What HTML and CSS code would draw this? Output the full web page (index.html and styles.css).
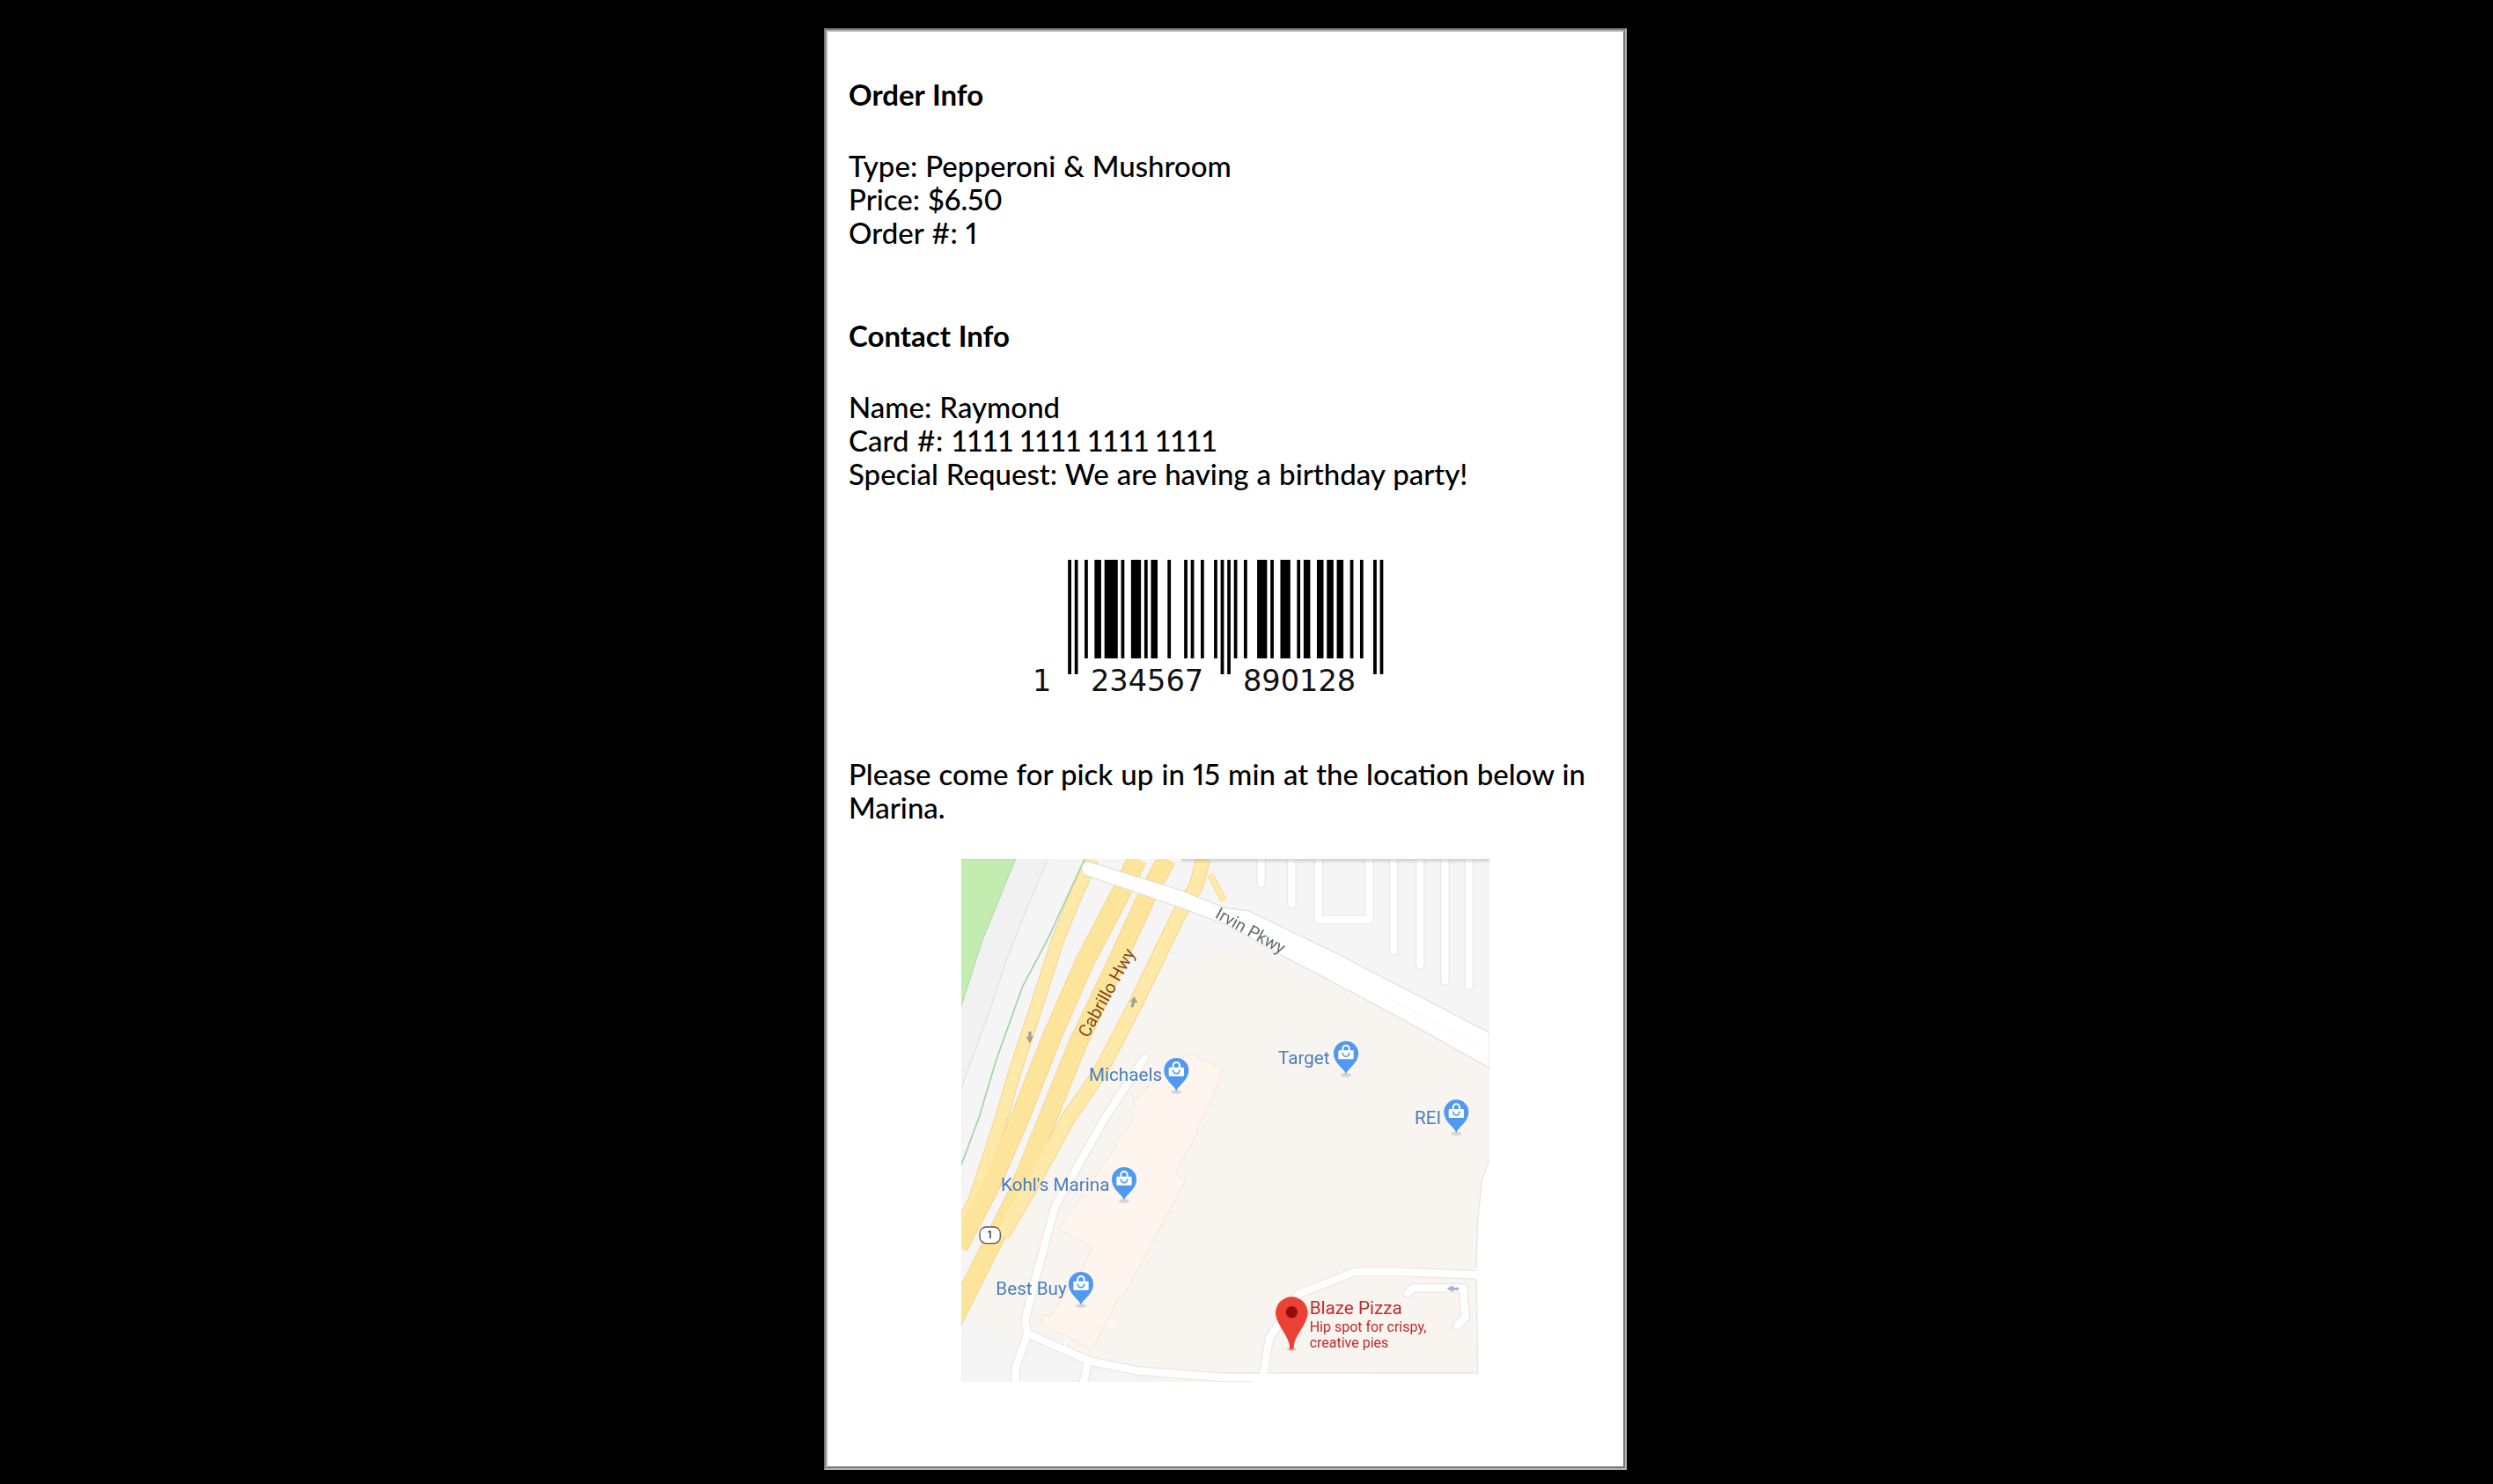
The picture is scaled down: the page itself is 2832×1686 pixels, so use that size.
FILE: index.html
```html
<!DOCTYPE html>
<html lang="en">
<head>
<meta charset="utf-8">
<title>Order Receipt</title>
<link rel="stylesheet" href="styles.css">
</head>
<body>
<main class="card">
  <div class="card-inner">
    <h2 class="heading">Order Info</h2>
    <p class="lines">Type: Pepperoni &amp; Mushroom<br>Price: $6.50<br>Order #: 1</p>
    <h2 class="heading heading-next">Contact Info</h2>
    <p class="lines">Name: Raymond<br>Card #: <span class="card-number">1111 1111 1111 1111</span><br>Special Request: We are having a birthday party!</p>

    <svg class="barcode" viewBox="0 0 440 170" width="440" height="170" role="img" aria-label="Barcode 1234567890128">
      <g transform="translate(41.2 0) scale(3.77 1)">
        <path class="bar" d="M0 6h1V136H0zM2 6h1V136H2zM46 6h1V136H46zM48 6h1V136H48zM92 6h1V136H92zM94 6h1V136H94z"/>
        <path class="bar" d="M5 6h1V118H5zM8 6h2V118H8zM11 6h4V118H11zM16 6h1V118H16zM19 6h3V118H19zM23 6h1V118H23zM25 6h2V118H25zM30 6h1V118H30zM35 6h1V118H35zM37 6h1V118H37zM40 6h1V118H40zM44 6h1V118H44zM50 6h1V118H50zM53 6h1V118H53zM57 6h3V118H57zM61 6h1V118H61zM64 6h3V118H64zM69 6h1V118H69zM71 6h2V118H71zM75 6h2V118H75zM78 6h2V118H78zM81 6h2V118H81zM85 6h1V118H85zM88 6h1V118H88z"/>
      </g>
      <text class="digits" x="1" y="155">1</text>
      <text class="digits" x="67" y="155">234567</text>
      <text class="digits" x="240" y="155">890128</text>
    </svg>

    <p class="lines notice">Please come for pick up in 15 min at the location below in Marina.</p>

    <svg class="map" viewBox="0 18 1800 1782" width="600" height="594" role="img" aria-label="Map of Marina showing Blaze Pizza">
      <defs>
        <linearGradient id="topshade" x1="0" y1="0" x2="0" y2="1">
          <stop offset="0" stop-color="#000" stop-opacity=".16"/>
          <stop offset="1" stop-color="#000" stop-opacity="0"/>
        </linearGradient>
        <g id="pin">
          <ellipse cx="0" cy="74" rx="18" ry="7" fill="#d8d6d2"/>
          <path fill="#4f99f0" d="M0 72C-4 52-42 36-42 0A42 42 0 1 1 42 0C42 36 4 52 0 72Z"/>
          <path fill="none" stroke="#fff" stroke-width="6" d="M-11-8V-16A11 11 0 0 1 11-16V-8"/>
          <rect x="-26" y="-10" width="52" height="30" rx="3" fill="#fff"/>
          <path fill="none" stroke="#4f99f0" stroke-width="5" stroke-linecap="round" d="M-11 0A11 11 0 0 0 11 0"/>
        </g>
      </defs>

      <rect x="0" y="18" width="1800" height="1782" fill="#f5f5f5"/>

      <!-- park and edges -->
      <path fill="#f1f1f1" d="M185 18H295L210 220 155 360 105 510 55 650 0 800V520L70 300Z"/>
      <path fill="none" stroke="#dcdcdc" stroke-width="3" d="M295 18 210 220 155 360 105 510 55 650 0 800"/>
      <path fill="#c2ecb0" stroke="#a9d9a2" stroke-width="3" d="M-5 18H185L70 300 0 520H-5Z"/>
      <path fill="none" stroke="#9fd4a2" stroke-width="5" d="M420 18 300 280 210 450 120 700 60 900 0 1060"/>

      <!-- shopping centre ground -->
      <path fill="#f8f4ef" d="M900 330 960 320 1100 370 1460 540 1800 730V1800H700L440 1750 220 1650 0 1585V1500L150 1290 430 660 560 520 700 380Z"/>
      <path fill="#f5f5f5" d="M0 1600 225 1655 440 1740 420 1800H0Z"/>

      <!-- highway carriageways -->
      <g fill="none" stroke="#f6cf80">
        <path stroke-width="45" d="M447 18 400 120 330 290 250 540 190 720 137 900 85 1060 45 1180-30 1330"/>
        <path stroke-width="66" d="M600 18 535 150 420 370 310 620 200 900 100 1130-10 1340"/>
        <path stroke-width="64" d="M700 18 630 150 515 400 400 640 295 900 190 1160 0 1537-40 1617"/>
        <path stroke-width="50" d="M825 18 800 110 740 210 600 500 470 750 365 900 240 1130 140 1300"/>
        <path stroke-width="22" d="M848 70 895 160"/>
      </g>
      <g fill="none">
        <path stroke="#fee9a8" stroke-width="40" d="M447 18 400 120 330 290 250 540 190 720 137 900 85 1060 45 1180-30 1330"/>
        <path stroke="#fde49b" stroke-width="61" d="M600 18 535 150 420 370 310 620 200 900 100 1130-10 1340"/>
        <path stroke="#fde49b" stroke-width="59" d="M700 18 630 150 515 400 400 640 295 900 190 1160 0 1537-40 1617"/>
        <path stroke="#fee9a8" stroke-width="45" d="M825 18 800 110 740 210 600 500 470 750 365 900 240 1130 140 1300"/>
        <path stroke="#fee9a8" stroke-width="18" d="M848 70 895 160"/>
      </g>
      <path fill="#a19f96" d="M233 646 220 622 229 624 229 606 239 606 239 624 247 620Z"/>
      <path fill="#a19f96" d="M590 487 601 508 592 506 586 524 577 521 583 503 574 505Z"/>

      <!-- building -->
      <path fill="#fef6ee" stroke="#fbe4cf" stroke-width="3" d="M765 675 893 735 858 820 862 825 820 900 800 938 808 942 730 1090 765 1112 552 1510 540 1505 445 1690 270 1597 275 1573 305 1575 415 1410 445 1340 332 1280 530 995 525 990 590 900 575 875 590 860 585 835 605 830 630 800 750 710Z"/>

      <!-- service roads -->
      <g fill="none" stroke="#e7e7e5" stroke-width="32" stroke-linecap="round" stroke-linejoin="round">
        <path d="M625 695 490 900 320 1200 255 1440 218 1590 225 1635 440 1730 600 1762 900 1785 1018 1785"/>
        <path d="M225 1640 185 1750 185 1810M430 1735 415 1810"/>
        <path d="M1030 1770 1050 1650 1150 1500 1340 1425 1500 1425 1760 1435"/>
        <path d="M1520 1498 1540 1480 1710 1480 1718 1580 1690 1608"/>
        <path d="M1022 18V102M1126 18V172M1218 18V225H1390V18M1473 18V332M1564 18V380M1648 18V434M1730 18V450"/>
      </g>
      <g fill="none" stroke="#fff" stroke-width="25" stroke-linecap="round" stroke-linejoin="round">
        <path d="M625 695 490 900 320 1200 255 1440 218 1590 225 1635 440 1730 600 1762 900 1785 1018 1785"/>
        <path d="M225 1640 185 1750 185 1810M430 1735 415 1810"/>
        <path d="M1030 1770 1050 1650 1150 1500 1340 1425 1500 1425 1760 1435"/>
        <path d="M1520 1498 1540 1480 1710 1480 1718 1580 1690 1608"/>
        <path d="M1022 18V102M1126 18V172M1218 18V225H1390V18M1473 18V332M1564 18V380M1648 18V434M1730 18V450"/>
      </g>
      <path fill="none" stroke="#fff" stroke-width="5" d="M360 1650 352 1678M500 1590 525 1602M497 1605 520 1617"/>
      <path fill="#a9add2" d="M1654 1482 1676 1471V1478H1695V1487H1676V1494Z"/>

      <!-- white edge at right and bottom -->
      <path fill="#fff" d="M1800 1040 1775 1110 1760 1250 1755 1410 1760 1770H1400L1400 1800H1800Z"/>
      <path fill="none" stroke="#e6e6e6" stroke-width="4" d="M1800 1040 1775 1110 1760 1250 1755 1410M1756 1450 1760 1770H1050M1016 1770H900"/>
      <path fill="#fff" d="M900 1772H1400V1800H1000Z"/>

      <!-- Irvin Pkwy -->
      <path fill="#fff" stroke="#dfd8ce" stroke-width="3" stroke-linejoin="round" d="M432 26 750 125 900 185 980 195 1280 340 1800 610V730L1460 540 1100 350 900 240 750 185 422 72C405 62 405 28 432 26Z"/>
      <path fill="none" stroke="#efefef" stroke-width="2" d="M1460 495 1800 670"/>

      <!-- top shadow -->
      <rect x="750" y="18" width="1050" height="16" fill="url(#topshade)"/>

      <!-- labels -->
      <text class="label road-brown" transform="translate(432 630) rotate(-61)">Cabrillo Hwy</text>
      <text class="label road-grey" transform="translate(862 216) rotate(29)">Irvin Pkwy</text>
      <text class="label shop" x="435" y="775">Michaels</text>
      <text class="label shop" x="1080" y="717">Target</text>
      <text class="label shop" x="1545" y="920">REI</text>
      <text class="label shop" x="135" y="1148">Kohl's Marina</text>
      <text class="label shop" x="118" y="1503">Best Buy</text>
      <use href="#pin" x="733" y="738"/>
      <use href="#pin" x="1311" y="680"/>
      <use href="#pin" x="1687" y="880"/>
      <use href="#pin" x="555" y="1110"/>
      <use href="#pin" x="408" y="1467"/>

      <!-- route shield -->
      <rect x="63" y="1272" width="70" height="56" rx="22" fill="#fff" stroke="#555" stroke-width="4"/>
      <text class="shield" x="97" y="1312">1</text>

      <!-- Blaze Pizza marker -->
      <ellipse cx="1126" cy="1688" rx="16" ry="6" fill="#d2cfca"/>
      <path fill="#ea4335" d="M1126 1510A55 55 0 0 1 1181 1564C1181 1600 1140 1640 1134 1672L1132 1690H1120L1118 1672C1112 1640 1071 1600 1071 1564A55 55 0 0 1 1126 1510Z"/>
      <circle cx="1126" cy="1562" r="20" fill="#960b0b"/>
      <text class="label place-name" x="1187" y="1570">Blaze Pizza</text>
      <text class="label place-note" x="1187" y="1630">Hip spot for crispy,</text>
      <text class="label place-note" x="1187" y="1683">creative pies</text>
    </svg>
  </div>
</main>
</body>
</html>
```
FILE: styles.css
```css
html, body {
  margin: 0;
  padding: 0;
  background: #000;
}

body {
  padding: 32px 0 0 936px;
  box-sizing: border-box;
  height: 1686px;
  overflow: hidden;
}

.card {
  width: 912px;
  box-sizing: border-box;
  background: #fff;
  border: 2px solid;
  border-color: #777 #b5b5b5 #b5b5b5 #777;
}

.card-inner {
  border: 2px solid;
  border-color: #b5b5b5 #777 #777 #b5b5b5;
  padding: 52px 24px 96px 24px;
  font-family: "Lato", "Noto Sans", sans-serif;
  font-size: 33px;
  font-weight: 500;
  font-variant-numeric: proportional-nums;
  word-spacing: 0.7px;
  line-height: 38px;
  color: #000;
}

.card-number {
  font-variant-numeric: tabular-nums;
  letter-spacing: -1.7px;
}

.heading {
  margin: 0;
  font: inherit;
  font-weight: 700;
}

.heading-next {
  margin-top: 79px;
}

.lines {
  margin: 43px 0 0;
}

.barcode {
  display: block;
  margin: 73px auto 0;
}

.bar {
  fill: #000;
}

.digits {
  font-family: "DejaVu Sans", sans-serif;
  font-size: 33.6px;
  font-weight: 400;
  word-spacing: 0;
  fill: #111;
}

.notice {
  margin-top: 60px;
}

.map {
  display: block;
  margin: 40px auto 0;
  filter: blur(0.45px);
}

.label {
  font-family: "Roboto", sans-serif;
  font-size: 62px;
  font-weight: 400;
  word-spacing: 0;
}

.shop {
  fill: #4a7dbd;
}

.road-brown {
  fill: #7b4a1f;
  font-size: 60px;
}

.road-grey {
  fill: #5f6b6e;
  font-size: 58px;
}

.place-name {
  fill: #c5282a;
  font-size: 62px;
}

.place-note {
  fill: #c5282a;
  font-size: 48px;
}

.shield {
  font-family: "Roboto", sans-serif;
  font-size: 36px;
  font-weight: 500;
  text-anchor: middle;
  fill: #333;
}
```
